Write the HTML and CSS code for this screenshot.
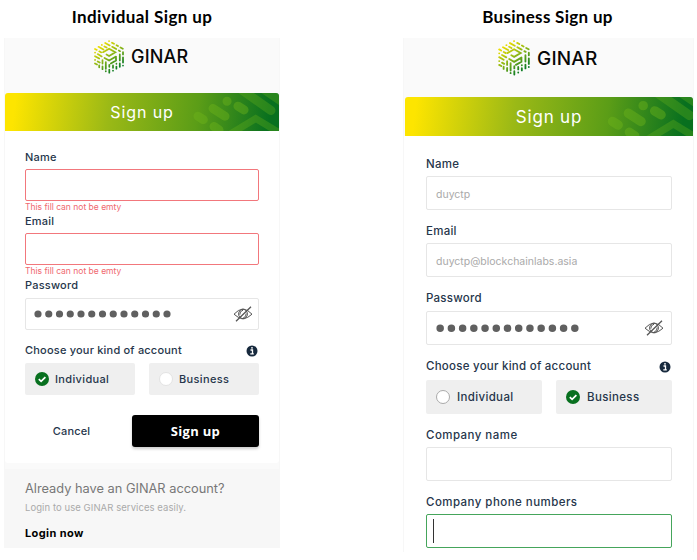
FILE: index.html
```html
<!DOCTYPE html>
<html lang="en">
<head>
<meta charset="utf-8">
<title>GINAR Sign up</title>
<link rel="stylesheet" href="styles.css">
</head>
<body>
<svg class="defs" width="0" height="0" aria-hidden="true">
  <defs>
    <linearGradient id="leaf" gradientUnits="userSpaceOnUse" x1="4" y1="5" x2="22" y2="30">
      <stop offset="0" stop-color="#f6e200"/><stop offset=".5" stop-color="#8db615"/><stop offset="1" stop-color="#087a25"/>
    </linearGradient>
    <symbol id="logo" viewBox="0 0 30 34">
      <g fill="none" stroke="url(#leaf)" stroke-width="1.75" stroke-linecap="round">
        <path d="M15 1h.1M18 2.7l2 1.1M22.5 5.2l1.5.9M26.5 7.5l2.3 1.3M11.2 2.9l4.5 2.5M18.2 6.8l4 2.3M24.8 10.5l1.2.7M7.8 4.9h.1M10.4 6.4l2.2 1.2M4.6 6.8l4.8 2.7M1 8.9l1.8 1M5.3 11.3l2 1.1M1 12.6h.1M3.7 14.1l4 2.3M1 16.2l4.2 2.4M1 19.9h.1M3.7 21.4l2 1.1M1 23.5l2 1.1"/>
        <path d="M9 12.2l6.1-3.5 6.2 3.6-6.2 3.6-2.6-1.5M10.5 18l4.6 2.6 6.9-4M22 16.6v3.9l-5.2 3"/>
        <path d="M29 12v2.4M29 17.3v5.3M29 25.5v.1M25.8 14.3v6.1M25.8 23.4v3.4M22.4 23.7v.1M22.4 26.6v2.1M19 25.4v2.4M19 30.6v.1M15.3 24.8v2M15.3 29.5v3.2M11.8 22v6.8M11.8 31.2v.1M8.5 20v3.5M8.5 26.4v2.8M5.2 25.3v2"/>
      </g>
    </symbol>
    <symbol id="pattern" viewBox="0 0 90 38">
      <g fill="none" stroke="#70b51b" stroke-opacity=".42" stroke-width="9" stroke-linecap="round">
        <path d="M9 23.2l5.3 3.4M24 15.4l12 7.8M38 8.2h.1M49 13.2l6 3.7M25 33.5l5 3.5"/>
        <path d="M50-5l32 22.5M73-5l28 19" stroke-opacity=".3"/>
        <path d="M38 43L66.7 25.5 94 42" stroke-opacity=".3" stroke-width="7" stroke-linejoin="miter"/>
      </g>
    </symbol>
    <symbol id="eye" viewBox="0 0 20 16">
      <g fill="none" stroke="#555" stroke-width="1">
        <path d="M1 8.2Q10-1.8 19 8.2Q10 17 1 8.2z"/><ellipse cx="10" cy="8" rx="4.4" ry="4.9"/><path d="M6.8 8.7q-.3-3.6 3.2-4.5M13.2 7.5q.2 3.4-3 4.5"/>
        <path d="M3 15.2L18 .8" stroke-width="1.3"/>
      </g>
    </symbol>
    <symbol id="info" viewBox="0 0 12 12">
      <circle cx="6" cy="6" r="5.5" fill="#17293d"/>
      <path d="M4.5 5h2v3.7M4.3 8.8h3.5" fill="none" stroke="#fff" stroke-width="1.3"/><circle cx="6" cy="2.8" r=".9" fill="#fff"/>
    </symbol>
    <symbol id="check" viewBox="0 0 14 14">
      <circle cx="7" cy="7" r="7" fill="#08701f"/><path d="M3.8 7.2l2.3 2.2 4.3-4.3" fill="none" stroke="#fff" stroke-width="1.7"/>
    </symbol>
    <symbol id="dots" viewBox="0 0 137 8">
      <path d="M4 4h130" fill="none" stroke="#606060" stroke-width="7.2" stroke-linecap="round" stroke-dasharray="0 10.75"/>
    </symbol>
  </defs>
</svg>
<main class="page">
  <section class="signup individual">
    <h1><span>Individual Sign up</span></h1>
    <div class="panel">
      <header class="brand"><svg class="logo"><use href="#logo"/></svg><span>GINAR</span></header>
      <div class="banner"><svg class="pattern"><use href="#pattern"/></svg><span>Sign up</span></div>
      <form class="card">
        <label>Name</label>
        <div class="field invalid"></div>
        <p class="error">This fill can not be emty</p>
        <label>Email</label>
        <div class="field invalid"></div>
        <p class="error">This fill can not be emty</p>
        <label>Password</label>
        <div class="field password"><svg class="dots"><use href="#dots"/></svg><svg class="eye"><use href="#eye"/></svg></div>
        <div class="kind"><label>Choose your kind of account</label><svg class="info"><use href="#info"/></svg></div>
        <div class="options">
          <div class="option"><svg class="radio"><use href="#check"/></svg><span>Individual</span></div>
          <div class="option"><i class="radio empty"></i><span>Business</span></div>
        </div>
        <div class="actions"><span class="cancel">Cancel</span><button type="button">Sign up</button></div>
      </form>
      <footer class="login">
        <p class="question">Already have an GINAR account?</p>
        <p class="hint">Login to use GINAR services easily.</p>
        <p class="now">Login now</p>
      </footer>
    </div>
  </section>
  <section class="signup business">
    <h1><span>Business Sign up</span></h1>
    <div class="panel">
      <header class="brand"><svg class="logo"><use href="#logo"/></svg><span>GINAR</span></header>
      <div class="banner"><svg class="pattern"><use href="#pattern"/></svg><span>Sign up</span></div>
      <form class="card">
        <label>Name</label>
        <div class="field"><span class="placeholder">duyctp</span></div>
        <label>Email</label>
        <div class="field"><span class="placeholder">duyctp@blockchainlabs.asia</span></div>
        <label>Password</label>
        <div class="field password"><svg class="dots"><use href="#dots"/></svg><svg class="eye"><use href="#eye"/></svg></div>
        <div class="kind"><label>Choose your kind of account</label><svg class="info"><use href="#info"/></svg></div>
        <div class="options">
          <div class="option"><i class="radio empty"></i><span>Individual</span></div>
          <div class="option"><svg class="radio"><use href="#check"/></svg><span>Business</span></div>
        </div>
        <label class="company">Company name</label>
        <div class="field"></div>
        <label class="company">Company phone numbers</label>
        <div class="field focused"><i class="caret"></i></div>
      </form>
    </div>
  </section>
</main>
</body>
</html>
```
FILE: styles.css
```css
* { box-sizing: border-box; }
body { margin: 0; background: #fff; color: #26364b; font-family: Inter, "Liberation Sans", sans-serif; font-size: 11px; }
h1, p { margin: 0; }
svg { display: block; flex: none; }
.defs { position: absolute; }
.page { display: flex; gap: 123px; width: 697px; height: 560px; padding-left: 4px; overflow: hidden; }
.signup { flex: none; }
.individual { width: 276px; }
.business { width: 291px; }
h1 { height: 38px; text-align: center; color: #000; font: 700 17px/34px Lato, sans-serif; letter-spacing: .4px; white-space: nowrap; }
.business h1 { padding-right: 2px; letter-spacing: .3px; }
.panel { background: #fafafa; border: solid #f7f7f7; border-width: 0 1px; overflow: hidden; }
.individual .panel { height: 510px; }
.business .panel { height: 514px; }
.brand { display: flex; align-items: flex-start; color: #080808; font-weight: 500; }
.individual .brand { height: 55px; padding: 2px 0 0 89px; gap: 7px; font-size: 18px; line-height: 34px; letter-spacing: .2px; }
.business .brand { height: 59px; padding: 2px 0 0 94px; gap: 7px; font-size: 19px; line-height: 37px; letter-spacing: .2px; }
.individual .logo { width: 30px; height: 34px; }
.business .logo { width: 32px; height: 36px; }
.banner { position: relative; display: flex; align-items: center; justify-content: center; overflow: hidden; border-radius: 3px 3px 0 0; color: #fff; background: linear-gradient(97deg, #fde500 4%, #9bb916 38%, #5b9d17 70%, #08701f 96%); letter-spacing: .9px; }
.individual .banner { height: 38px; font-size: 16px; }
.business .banner { height: 39px; font-size: 17px; margin-left: 1px; letter-spacing: .8px; }
.banner span { position: relative; }
.pattern { position: absolute; right: 0; top: 0; width: 90px; height: 38px; }
.business .pattern { width: 95px; height: 40px; right: -5px; }
.card { background: #fff; }
.individual .card { height: 332px; padding: 18px 20px 16px; border-radius: 0 0 3px 3px; }
.business .card { height: 416px; padding: 20px 21px 0 22px; }
label { display: block; height: 16px; line-height: 16px; font-weight: 450; margin-bottom: 4px; letter-spacing: .2px; white-space: nowrap; }
.business label { font-size: 11.5px; letter-spacing: .25px; }
.business .company { letter-spacing: .45px; }
.field { display: flex; align-items: center; height: 32px; border: 1px solid #e6e6e6; border-radius: 2px; background: #fff; padding-left: 9px; }
.business .field { height: 34px; margin-bottom: 13px; }
.individual .invalid { border-color: #f2777c; }
.error { height: 12px; font-size: 8.5px; line-height: 13px; color: #ef686f; white-space: nowrap; }
.individual .password { margin: 5px 0 12px; padding-left: 8px; }
.business .password { margin-top: 5px; }
.placeholder { color: #aaa; font-size: 10.5px; padding-top: 2px; }
.individual .dots { width: 137px; height: 8px; }
.business .dots { width: 143px; height: 8.4px; }
.eye { width: 20px; height: 16px; margin: 0 5px 0 auto; }
.business .eye { margin-right: 7px; }
.kind { display: flex; justify-content: space-between; margin-bottom: 1px; }
.business .kind { margin-bottom: 2px; }
.info { width: 12px; height: 12px; margin: 3px 1px 0 0; }
.options { display: grid; grid-template-columns: 1fr 1fr; gap: 14px; }
.option { display: flex; align-items: center; gap: 6px; height: 32px; padding-left: 10px; background: #efefef; border-radius: 2px; font-weight: 450; letter-spacing: .35px; }
.business .option { height: 34px; font-size: 11.5px; gap: 7px; }
.business .options { margin-bottom: 13px; }
.radio { width: 14px; height: 14px; }
.empty { flex: none; background: #fff; border: 1px solid #e3e3e3; border-radius: 50%; }
.business .empty { border-color: #aaa; }
.actions { display: flex; margin-top: 20px; align-items: center; justify-content: space-between; }
.cancel { width: 93px; text-align: center; font-size: 11px; font-weight: 450; letter-spacing: .15px; }
button { width: 127px; height: 32px; padding: 0; border: 0; border-radius: 3px; background: #000; color: #fff; font: 700 13px "Open Sans", sans-serif; letter-spacing: .3px; box-shadow: 0 2px 3px #0003; }
.login { margin-top: 6px; height: 79px; padding: 10px 20px; background: #f7f7f7; white-space: nowrap; }
.question { font-size: 12.8px; line-height: 20px; color: #777; }
.hint { font-size: 9.5px; line-height: 17px; color: #aaa; letter-spacing: .07px; }
.now { font-size: 11px; line-height: 16px; margin-top: 9px; font-weight: 700; color: #000; letter-spacing: .4px; }
.business .focused { border-color: #45a55b; padding-left: 6px; }
.caret { width: 1px; height: 24px; background: #333; }
```
